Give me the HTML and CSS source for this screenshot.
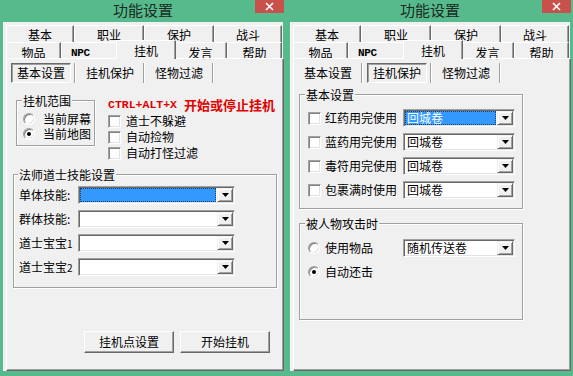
FILE: index.html
```html
<!DOCTYPE html>
<html lang="zh-CN">
<head>
<meta charset="utf-8">
<title>功能设置</title>
<link rel="stylesheet" href="styles.css">
</head>
<body>
<div class="desktop">
  <!-- Left window -->
  <div class="window">
    <div class="titlebar">
      <span class="title">功能设置</span>
      <span class="close"><svg width="9" height="9" viewBox="0 0 9 9"><path d="M1 1L8 8M8 1L1 8" stroke="#fff" stroke-width="1.6" fill="none"/></svg></span>
    </div>
    <div class="client">
      <div class="tabrow back">
        <div class="tab w68">基本</div><div class="tab w70">职业</div><div class="tab w70">保护</div><div class="tab w68">战斗</div>
      </div>
      <div class="tabrow front">
        <div class="tab w55">物品</div><div class="tab w57 npc">NPC</div><div class="tab w56 sel">挂机</div><div class="tab w53">发言</div><div class="tab w55">帮助</div>
      </div>
      <div class="panel">
        <div class="subtabs">
          <div class="subtab sel">基本设置</div><div class="sep"></div>
          <div class="subtab">挂机保护</div><div class="sep"></div>
          <div class="subtab">怪物过滤</div><div class="sep"></div>
        </div>
        <div class="page">
          <div class="top">
            <div class="group g-range">
              <div class="gtitle">挂机范围</div>
              <div class="radios">
                <div class="opt"><span class="radio"></span><span class="otext">当前屏幕</span></div>
                <div class="opt"><span class="radio on"></span><span class="otext">当前地图</span></div>
              </div>
            </div>
            <div class="rightcol">
              <div class="hotkey"><span class="keys">CTRL+ALT+X</span><span class="hk-text">开始或停止挂机</span></div>
              <div class="crow"><span class="check"></span>道士不躲避</div>
              <div class="crow"><span class="check"></span>自动捡物</div>
              <div class="crow"><span class="check"></span>自动打怪过滤</div>
            </div>
          </div>
          <div class="group g-skill">
            <div class="gtitle">法师道士技能设置</div>
            <div class="fields">
              <span class="flabel">单体技能:</span>
              <div class="combo w157"><div class="value hl"></div><div class="drop"><svg width="7" height="4" viewBox="0 0 7 4"><path d="M0 0H7L3.5 4Z" fill="#000"/></svg></div></div>
              <span class="flabel">群体技能:</span>
              <div class="combo w157"><div class="value"></div><div class="drop"><svg width="7" height="4" viewBox="0 0 7 4"><path d="M0 0H7L3.5 4Z" fill="#000"/></svg></div></div>
              <span class="flabel">道士宝宝<small class="num">1</small></span>
              <div class="combo w157"><div class="value"></div><div class="drop"><svg width="7" height="4" viewBox="0 0 7 4"><path d="M0 0H7L3.5 4Z" fill="#000"/></svg></div></div>
              <span class="flabel">道士宝宝<small class="num">2</small></span>
              <div class="combo w157"><div class="value"></div><div class="drop"><svg width="7" height="4" viewBox="0 0 7 4"><path d="M0 0H7L3.5 4Z" fill="#000"/></svg></div></div>
            </div>
          </div>
          <div class="actions">
            <div class="btn">挂机点设置</div>
            <div class="btn">开始挂机</div>
          </div>
        </div>
      </div>
    </div>
  </div>

  <!-- Right window -->
  <div class="window">
    <div class="titlebar">
      <span class="title">功能设置</span>
      <span class="close"><svg width="9" height="9" viewBox="0 0 9 9"><path d="M1 1L8 8M8 1L1 8" stroke="#fff" stroke-width="1.6" fill="none"/></svg></span>
    </div>
    <div class="client">
      <div class="tabrow back">
        <div class="tab w68">基本</div><div class="tab w70">职业</div><div class="tab w70">保护</div><div class="tab w68">战斗</div>
      </div>
      <div class="tabrow front">
        <div class="tab w55">物品</div><div class="tab w57 npc">NPC</div><div class="tab w56 sel">挂机</div><div class="tab w53">发言</div><div class="tab w55">帮助</div>
      </div>
      <div class="panel">
        <div class="subtabs">
          <div class="subtab">基本设置</div><div class="sep"></div>
          <div class="subtab sel">挂机保护</div><div class="sep"></div>
          <div class="subtab">怪物过滤</div><div class="sep"></div>
        </div>
        <div class="page">
          <div class="group g-basic">
            <div class="gtitle">基本设置</div>
            <div class="rows">
              <div class="row"><span class="check"></span><span class="rlabel">红药用完使用</span>
                <div class="combo w112"><div class="value hl"><span class="hltext">回城卷</span></div><div class="drop"><svg width="7" height="4" viewBox="0 0 7 4"><path d="M0 0H7L3.5 4Z" fill="#000"/></svg></div></div></div>
              <div class="row"><span class="check"></span><span class="rlabel">蓝药用完使用</span>
                <div class="combo w112"><div class="value">回城卷</div><div class="drop"><svg width="7" height="4" viewBox="0 0 7 4"><path d="M0 0H7L3.5 4Z" fill="#000"/></svg></div></div></div>
              <div class="row"><span class="check"></span><span class="rlabel">毒符用完使用</span>
                <div class="combo w112"><div class="value">回城卷</div><div class="drop"><svg width="7" height="4" viewBox="0 0 7 4"><path d="M0 0H7L3.5 4Z" fill="#000"/></svg></div></div></div>
              <div class="row"><span class="check"></span><span class="rlabel">包裹满时使用</span>
                <div class="combo w112"><div class="value">回城卷</div><div class="drop"><svg width="7" height="4" viewBox="0 0 7 4"><path d="M0 0H7L3.5 4Z" fill="#000"/></svg></div></div></div>
            </div>
          </div>
          <div class="group g-attack">
            <div class="gtitle">被人物攻击时</div>
            <div class="rows">
              <div class="row"><span class="radio"></span><span class="rlabel">使用物品</span>
                <div class="combo w112"><div class="value">随机传送卷</div><div class="drop"><svg width="7" height="4" viewBox="0 0 7 4"><path d="M0 0H7L3.5 4Z" fill="#000"/></svg></div></div></div>
              <div class="row"><span class="radio on"></span><span class="rlabel">自动还击</span></div>
            </div>
          </div>
        </div>
      </div>
    </div>
  </div>
</div>
</body>
</html>
```

FILE: styles.css
```css
* { box-sizing: border-box; }
html, body { margin: 0; padding: 0; }
body {
  width: 573px;
  height: 376px;
  overflow: hidden;
  background: #56ba8c;
  font-family: "Noto Sans CJK SC", "Noto Sans", sans-serif;
  font-size: 12px;
  color: #000;
}

.desktop { display: flex; gap: 7px; padding-left: 3px; }
.window { width: 280px; display: flex; flex-direction: column; }

.titlebar {
  height: 22px;
  display: grid;
  grid-template-columns: 1fr auto 1fr;
}
.title {
  grid-column: 2;
  font-size: 15px;
  line-height: 20px;
  color: #1b2b24;
}
.close {
  grid-column: 3;
  justify-self: end;
  width: 29px;
  height: 13px;
  margin-right: -1px;
  background: #c9514c;
  display: flex;
  align-items: center;
  justify-content: center;
}

.client {
  height: 349px;
  background: #f0f0f0;
  padding: 3px 0 0 2px;
  display: flex;
  flex-direction: column;
  border-left: 1px solid #fbfbfb;
}

/* main tabs */
.tabrow { display: flex; width: 276px; }
.tab {
  background: #f0f0f0;
  border-top: 1px solid #fff;
  border-left: 1px solid #fff;
  border-right: 1px solid #696969;
  box-shadow: inset -1px 0 0 #a0a0a0;
  display: flex;
  align-items: center;
  justify-content: center;
  line-height: 14px;
  white-space: nowrap;
}
.tabrow.back .tab { height: 17px; padding-top: 2px; }
.tabrow.front .tab { height: 16px; padding-top: 4px; }
.tabrow.front .tab.sel {
  height: 19px;
  margin: -2px -2px -1px;
  padding-top: 1px;
  position: relative;
  z-index: 1;
}
.w53 { width: 53px; }
.w55 { width: 55px; }
.w56 { width: 56px; }
.tab.sel.w56 { width: 60px; }
.w57 { width: 57px; }
.w68 { width: 68px; }
.w70 { width: 70px; }
.tab.npc {
  font-family: "Liberation Mono", monospace;
  font-size: 11px;
  font-weight: bold;
  letter-spacing: -0.4px;
  justify-content: flex-start;
  padding-left: 9px;
}

.panel {
  flex: 1;
  width: 278px;
  border-top: 1px solid #fff;
  border-left: 1px solid #fff;
  border-right: 1px solid #696969;
  border-bottom: 1px solid #696969;
  box-shadow: inset -1px -1px 0 #a0a0a0;
  display: flex;
  flex-direction: column;
}

/* sub tabs (button style) */
.subtabs {
  display: flex;
  height: 20px;
  margin-top: 4px;
  padding-left: 4px;
}
.subtab {
  width: 60px;
  display: flex;
  align-items: center;
  justify-content: center;
  line-height: 14px;
}
.subtab.sel {
  border: 1px solid;
  border-color: #696969 #fff #fff #696969;
  box-shadow: inset 1px 1px 0 #a0a0a0;
}
.sep {
  width: 2px;
  border-left: 1px solid #a0a0a0;
  border-right: 1px solid #fff;
  margin: 0 4px 0 3px;
}

.page { display: flex; flex-direction: column; flex: 1; }

/* group boxes */
.group {
  border: 1px solid #a0a0a0;
  box-shadow: 1px 1px 0 #fff, inset 1px 1px 0 #fff;
  display: flex;
  flex-direction: column;
}
.gtitle {
  align-self: flex-start;
  margin: -7px 0 0 5px;
  padding: 0 1px;
  line-height: 14px;
  background: #f0f0f0;
}

/* left page */
.top { display: flex; align-items: flex-start; }
.g-range { width: 79px; margin: 17px 0 0 9px; padding-bottom: 4px; }
.radios { margin-top: 3px; }
.opt {
  height: 15px;
  display: flex;
  align-items: center;
  padding-left: 6px;
}
.otext { line-height: 14px; white-space: nowrap; }
.radio {
  width: 12px;
  height: 12px;
  flex: none;
  border-radius: 50%;
  background: #fff;
  border: 1px solid;
  border-color: #a0a0a0 #fff #fff #a0a0a0;
  box-shadow: inset 1px 1px 0 #808080, inset -1px -1px 0 #e3e3e3;
  margin-right: 8px;
  display: flex;
  align-items: center;
  justify-content: center;
}
.radio.on::after {
  content: "";
  width: 4px;
  height: 4px;
  border-radius: 50%;
  background: #000;
}

.rightcol { margin: 14px 0 0 13px; }
.hotkey {
  line-height: 16px;
  height: 16px;
  color: #e00000;
  font-weight: bold;
  white-space: nowrap;
  display: flex;
  align-items: center;
}
.keys { font-family: "Liberation Mono", monospace; font-size: 11.5px; }
.hk-text { font-size: 13px; margin-left: 7px; }
.crow {
  height: 16px;
  display: flex;
  align-items: center;
  line-height: 14px;
  white-space: nowrap;
}
.check {
  width: 13px;
  height: 13px;
  flex: none;
  background: #fff;
  border: 1px solid;
  border-color: #a0a0a0 #fff #fff #a0a0a0;
  box-shadow: inset 1px 1px 0 #808080, inset -1px -1px 0 #e3e3e3;
  margin-right: 5px;
}

.g-skill { width: 264px; margin: 13px 0 0 6px; padding-bottom: 11px; }
.g-skill .gtitle { margin-left: 4px; }
.fields {
  margin-top: 4px;
  padding-left: 5px;
  display: grid;
  grid-template-columns: 59px 157px;
  grid-auto-rows: 18px;
  row-gap: 6px;
  align-items: center;
}
.flabel { line-height: 14px; white-space: nowrap; }
.num { font-size: 10px; }

/* combobox */
.combo {
  display: flex;
  height: 18px;
  border: 1px solid;
  border-color: #a0a0a0 #fff #fff #a0a0a0;
  box-shadow: inset 1px 1px 0 #696969, inset -1px -1px 0 #e3e3e3;
  background: #fff;
  padding: 1px;
  flex: none;
}
.w157 { width: 157px; }
.w112 { width: 112px; }
.value {
  flex: 1;
  background: #fff;
  line-height: 14px;
  padding-left: 2px;
  white-space: nowrap;
}
.value.hl {
  background: #3399ff;
  margin-right: 1px;
  outline: 1px dotted #1d3f66;
  outline-offset: -1px;
}
.hltext { color: #fff; }
.drop {
  width: 16px;
  flex: none;
  background: #f0f0f0;
  border: 1px solid;
  border-color: #f0f0f0 #696969 #696969 #f0f0f0;
  box-shadow: inset 1px 1px 0 #fff, inset -1px -1px 0 #a0a0a0;
  display: flex;
  align-items: center;
  justify-content: center;
}

/* buttons */
.actions {
  display: flex;
  justify-content: flex-end;
  gap: 6px;
  padding-right: 13px;
  margin-top: 43px;
}
.btn {
  width: 90px;
  height: 22px;
  background: #f0f0f0;
  border: 1px solid;
  border-color: #fff #696969 #696969 #fff;
  box-shadow: inset -1px -1px 0 #a0a0a0;
  display: flex;
  align-items: center;
  justify-content: center;
  line-height: 14px;
}

/* right page */
.g-basic { width: 224px; margin: 11px 0 0 5px; padding-bottom: 9px; }
.g-attack { width: 224px; margin: 14px 0 0 5px; padding-bottom: 38px; }
.g-basic .rows { margin-top: 7px; }
.g-attack .rows { margin-top: 8px; }
.rows { display: flex; flex-direction: column; gap: 6px; }
.row {
  height: 18px;
  display: flex;
  align-items: center;
  padding-left: 8px;
}
.row .check { margin-right: 4px; }
.row .radio { margin-right: 5px; }
.rlabel { width: 78px; line-height: 14px; white-space: nowrap; }
```
